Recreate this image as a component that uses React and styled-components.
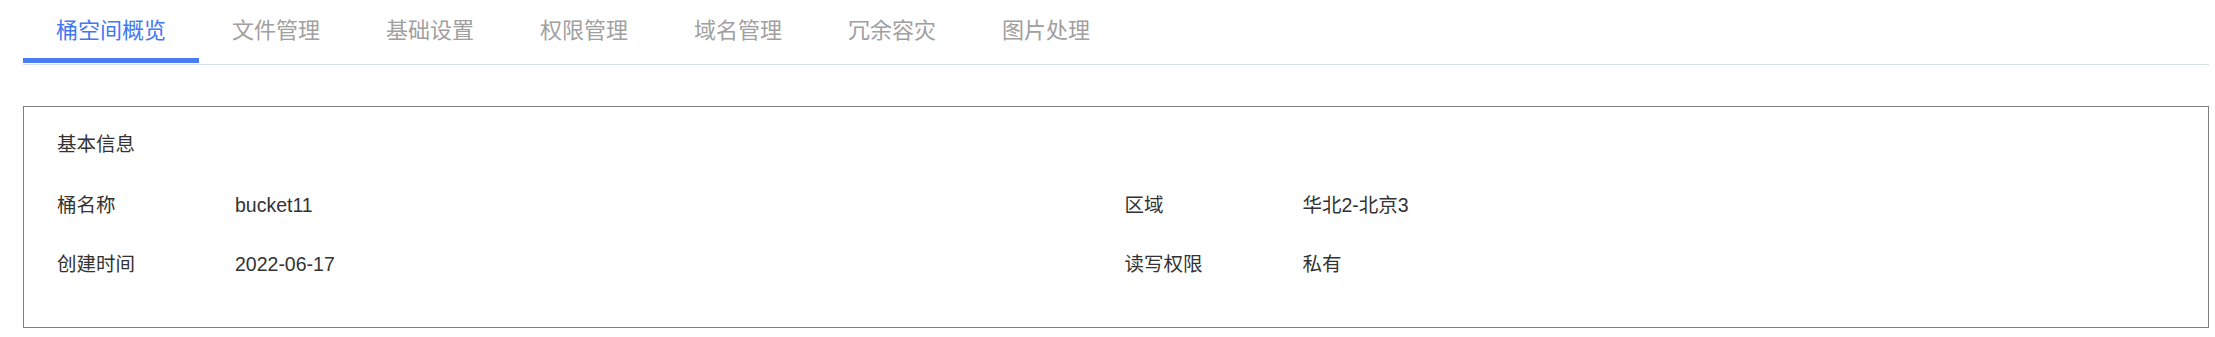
import React from 'react'
import styled, { createGlobalStyle } from 'styled-components'

const GlobalStyle = createGlobalStyle`
  body {
    margin: 0;
    background: #fff;
    font-family: "Liberation Sans", "Noto Sans CJK SC", sans-serif;
  }
`

const Page = styled.div`
  padding: 0 6px 0 23px;
`

const TabBar = styled.div`
  display: flex;
  border-bottom: 1px solid #dae0e8;
  padding-bottom: 1px;
`

const Tab = styled.div`
  padding: 16px 33px 12px;
  font-size: 22px;
  line-height: 30px;
  white-space: nowrap;
  cursor: pointer;
  color: ${ ({ active }) => active ? '#4278f5' : '#a0a0a0' };
  border-bottom: 5px solid ${ ({ active }) => active ? '#4a7cf6' : 'transparent' };
`

const Card = styled.div`
  margin-top: 41px;
  border: 1px solid #7f7f7f;
  padding: 22px 16px 48px 33px;
`

const CardTitle = styled.div`
  font-size: 19.5px;
  line-height: 30px;
  color: #333;
`

const Fields = styled.div`
  margin-top: 31px;
  display: grid;
  grid-template-columns: 1fr 1fr;
  grid-auto-rows: 30px;
  row-gap: 29px;
`

const Field = styled.div`
  display: flex;
  align-items: center;
  font-size: 19.5px;
  line-height: 30px;
  color: #333;
`

const Label = styled.span`
  width: 178px;
  flex-shrink: 0;
`

const Value = styled.span`
  color: #333;
`

const tabs = ['桶空间概览', '文件管理', '基础设置', '权限管理', '域名管理', '冗余容灾', '图片处理']

const fields = [
  ['桶名称', 'bucket11'],
  ['区域', '华北2-北京3'],
  ['创建时间', '2022-06-17'],
  ['读写权限', '私有']
]

export default function App () {
  return (
    <Page>
      <GlobalStyle />
      <TabBar>
        {tabs.map((t, i) => (
          <Tab key={t} active={i === 0}>{t}</Tab>
        ))}
      </TabBar>
      <Card>
        <CardTitle>基本信息</CardTitle>
        <Fields>
          {fields.map(([label, value]) => (
            <Field key={label}>
              <Label>{label}</Label>
              <Value>{value}</Value>
            </Field>
          ))}
        </Fields>
      </Card>
    </Page>
  )
}
